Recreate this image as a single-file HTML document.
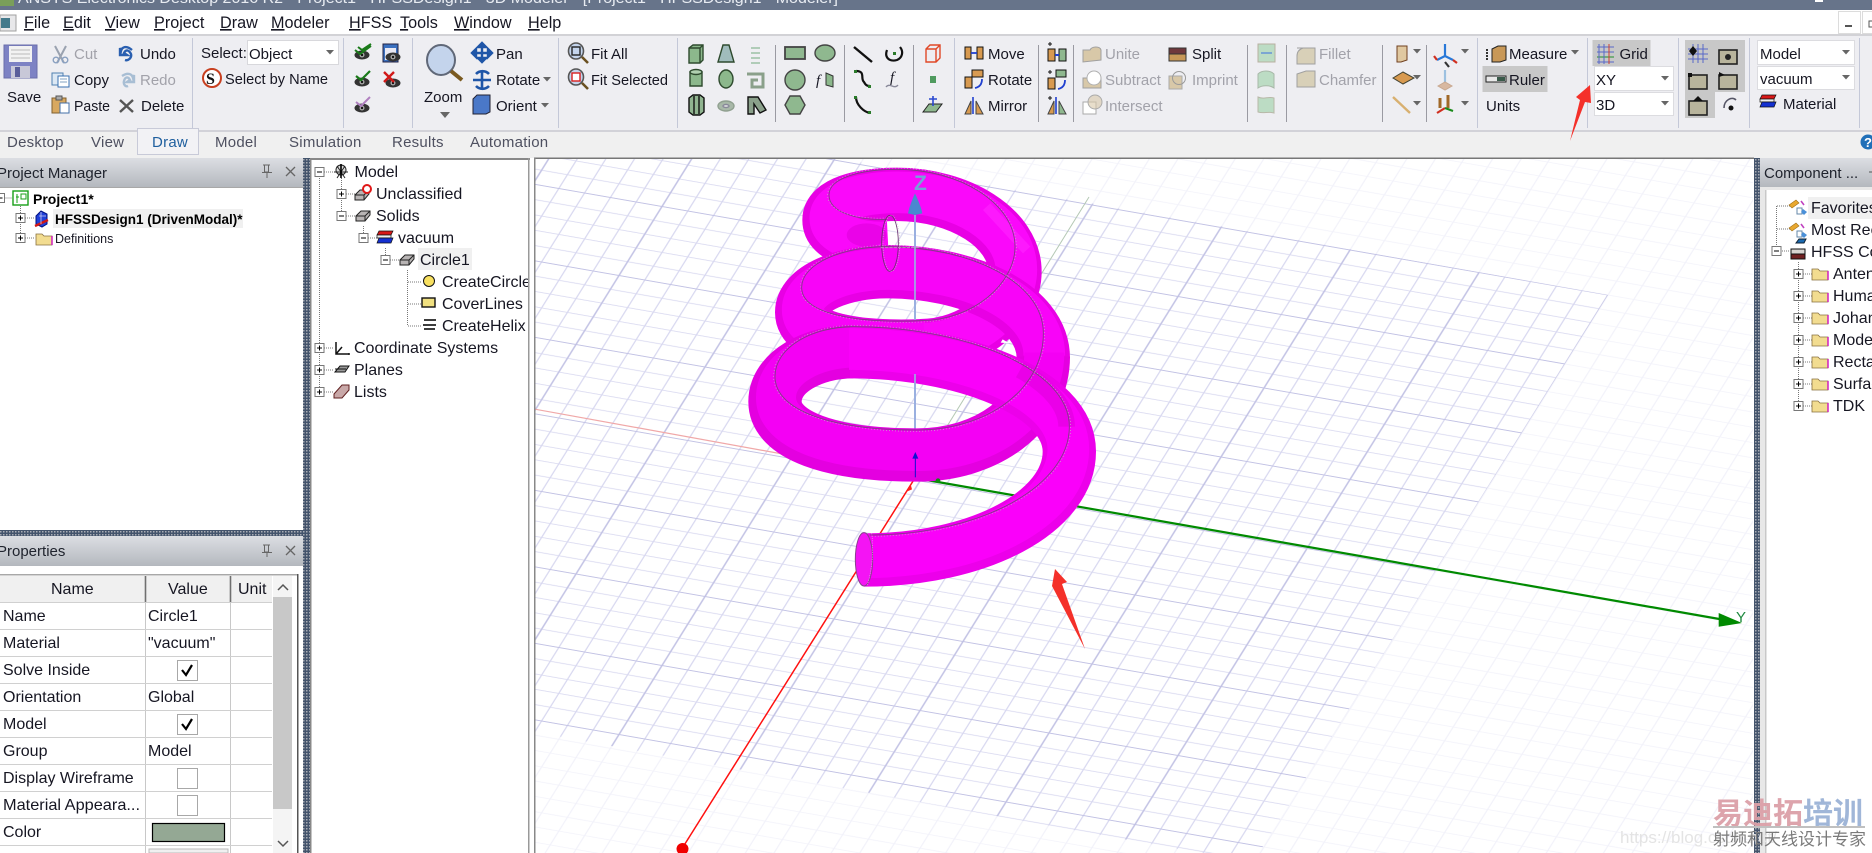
<!DOCTYPE html>
<html><head><meta charset="utf-8"><title>HFSS</title>
<style>
html,body{margin:0;padding:0;background:#fff;width:1872px;height:853px;overflow:hidden}
svg{display:block;position:absolute;left:0;top:0}
text{font-family:"Liberation Sans","Noto Sans CJK SC",sans-serif;font-size:15px;fill:#161622}
.g{fill:#a2a2aa}
.tab{fill:#4e5060;letter-spacing:.25px}
.b{font-weight:bold;font-size:13.5px;fill:#000}
.h{font-size:15px;fill:#20242e}
.c{fill:#222}
.tr text{font-size:16px}
.mn text{font-size:16.2px}
</style></head><body>
<svg width="1872" height="853" viewBox="0 0 1872 853" xmlns="http://www.w3.org/2000/svg">
<defs>
<pattern id="sp" width="3" height="3" patternUnits="userSpaceOnUse"><rect width="3" height="3" fill="#44546c"/><rect width="1.5" height="1.5" fill="#a8acb4"/></pattern>
<linearGradient id="hd" x1="0" y1="0" x2="0" y2="1"><stop offset="0" stop-color="#dcdee3"/><stop offset="1" stop-color="#b4b8be"/></linearGradient>
<pattern id="gf" width="100" height="100" patternUnits="userSpaceOnUse" patternTransform="matrix(1.29 .225 -.43 .69 1608 295)"><path d="M0 0H100M0 20H100M0 40H100M0 60H100M0 80H100M0 100H100M0 0V100M20 0V100M40 0V100M60 0V100M80 0V100M100 0V100" stroke="#f2f2fa" stroke-width="1" fill="none"/></pattern>
<pattern id="gd" width="100" height="100" patternUnits="userSpaceOnUse" patternTransform="matrix(1.29 .225 -.43 .69 1608 295)"><path d="M0 20H100M0 40H100M0 60H100M0 80H100M20 0V100M40 0V100M60 0V100M80 0V100" stroke="#d8d8f0" stroke-width=".95" fill="none"/><path d="M0 0H100M0 100H100M0 0V100M100 0V100" stroke="#c2c2e4" stroke-width="1.2" fill="none"/></pattern>
<clipPath id="vp"><rect x="535" y="159" width="1218" height="694"/></clipPath>
<clipPath id="gclip"><polygon points="534,157 830,157 1608,295 1259,853 1200,853 534,732"/></clipPath>
<clipPath id="mt"><rect x="311" y="160" width="217" height="260"/></clipPath>
<clipPath id="pn"><rect x="0" y="600" width="145" height="253"/></clipPath>
<g id="pb"><rect x="-4.5" y="-4.5" width="9" height="9" fill="#fff" stroke="#777"/><path d="M-2.5 0H2.5M0-2.5V2.5" stroke="#000" fill="none"/></g>
<g id="mb"><rect x="-4.5" y="-4.5" width="9" height="9" fill="#fff" stroke="#777"/><path d="M-2.5 0H2.5" stroke="#000" fill="none"/></g>
<g id="ar"><path d="M-4-2H4L0 2.5Z" fill="#666"/></g>
<g id="eye"><ellipse cx="0" cy="3" rx="7.5" ry="4.5" fill="#333"/><circle cx="0" cy="3" r="2.5" fill="#aaa"/><circle cx="0" cy="3" r="1.2" fill="#111"/></g>
<g id="solid"><path d="M0 5V0L5-5H14V-1L9 5Z" fill="#b8b4b4" stroke="#222"/><path d="M0 0H9V5M9 0L14-5" fill="none" stroke="#222"/></g>
<g id="mat"><path d="M1-7H15L13-3H-1Z" fill="#d81818" stroke="#111" stroke-width=".7"/><path d="M-1-3H13V0H-1Z" fill="#eee" stroke="#111" stroke-width=".7"/><path d="M1 0H15L13 5H-1Z" fill="#1430d0" stroke="#111" stroke-width=".7"/></g>
<g id="fold"><path d="M0-5H6L8-3H16V6H0Z" fill="#f2dc90" stroke="#887040" stroke-width=".8"/><path d="M16-3V6" stroke="#d020c0" stroke-width="1.5"/></g>
<g id="fv"><path d="M-6-1L1-6L4-3L-3 2Z" fill="#e8a830" stroke="#a07018" stroke-width=".6"/><path d="M6-5L9-1" stroke="#c040c0" stroke-width="1.6"/><path d="M2 2H7V8H2Z" fill="#fff" stroke="#6688aa"/><path d="M8 3L12 6L9 9L6 6Z" fill="#4a90d8"/></g>
<g id="box"><rect x="0" y="0" width="18" height="14" fill="#b8b49c" stroke="#222" stroke-width="1.6"/></g>
</defs>

<!-- base -->
<rect width="1872" height="853" fill="#fff"/>
<!-- title bar -->
<rect width="1872" height="10" fill="#67748a"/>
<rect x="0" y="0" width="14" height="6" fill="#7a9f5a"/>
<text x="18" y="3" style="fill:#e8ecf2" textLength="820" lengthAdjust="spacingAndGlyphs">ANSYS Electronics Desktop 2016 R2 - Project1 - HFSSDesign1 - 3D Modeler - [Project1 - HFSSDesign1 - Modeler]</text>
<rect x="1815" y="0" width="8" height="2" fill="#fff"/>

<!-- menu -->
<rect x="0" y="10" width="1872" height="25" fill="#fff"/>
<rect x="0" y="15" width="16" height="16" fill="#e8e8ea" stroke="#a0a0a0"/><rect x="1" y="18" width="9" height="10" fill="#447a8c"/>
<g class="mn">
<text x="24" y="28"><tspan text-decoration="underline">F</tspan>ile</text>
<text x="63" y="28"><tspan text-decoration="underline">E</tspan>dit</text>
<text x="105" y="28"><tspan text-decoration="underline">V</tspan>iew</text>
<text x="154" y="28"><tspan text-decoration="underline">P</tspan>roject</text>
<text x="220" y="28"><tspan text-decoration="underline">D</tspan>raw</text>
<text x="271" y="28"><tspan text-decoration="underline">M</tspan>odeler</text>
<text x="349" y="28"><tspan text-decoration="underline">H</tspan>FSS</text>
<text x="400" y="28"><tspan text-decoration="underline">T</tspan>ools</text>
<text x="454" y="28"><tspan text-decoration="underline">W</tspan>indow</text>
<text x="528" y="28"><tspan text-decoration="underline">H</tspan>elp</text>
</g>
<rect x="1838.5" y="11.5" width="22" height="22" fill="#fff" stroke="#dcdcdc"/><rect x="1845" y="25" width="7" height="2" fill="#555"/>
<rect x="1862.5" y="11.5" width="12" height="22" fill="#fff" stroke="#dcdcdc"/><rect x="1869" y="21" width="6" height="6" fill="none" stroke="#555"/>

<!-- ribbon -->
<rect x="0" y="34" width="1872" height="97" fill="#eeeef2"/>
<rect x="0" y="34" width="1872" height="2" fill="#d2d2d6"/>
<rect x="0" y="130" width="1872" height="2" fill="#d2d2d8"/>
<rect x="0" y="132" width="1872" height="26" fill="#f0f0f0"/>
<g stroke="#c4c8d8" stroke-width="1"><path d="M192.5 38V128M343.5 38V128M412.5 38V128M558.5 38V128M677.5 38V128M954.5 38V128M1477.5 38V128M1587.5 38V128M1678.5 38V128M1749.5 38V128M1859.5 38V128"/></g>
<g stroke="#9a9aa2" stroke-width="1"><path d="M775.5 45V122M844.5 45V122M913.5 45V122M1038.5 45V122M1073.5 45V122M1247.5 45V122M1286.5 45V122M1382.5 45V122M1426.5 45V122"/></g>

<!-- Save -->
<path d="M4 45H37V78H4Z" fill="#7d82c4" stroke="#6a6eaa"/><rect x="9" y="46" width="23" height="16" fill="#f2f2f2"/><path d="M11 50H30M11 54H30M11 58H30" stroke="#bbb"/><rect x="11" y="66" width="19" height="12" fill="#c8c8d8"/><rect x="15" y="67" width="5" height="10" fill="#5a5e9a"/>
<text x="7" y="102">Save</text>
<!-- Clipboard -->
<path d="M55 46L64 63M66 46L57 63" stroke="#9aa2b0" stroke-width="2"/><circle cx="56" cy="60" r="2.8" fill="none" stroke="#8aa0c0" stroke-width="1.4"/><circle cx="65" cy="60" r="2.8" fill="none" stroke="#8aa0c0" stroke-width="1.4"/>
<text x="74" y="59" class="g">Cut</text>
<rect x="52" y="73" width="11" height="12" fill="#dce8f4" stroke="#5080b0"/><rect x="58" y="76" width="11" height="11" fill="#fff" stroke="#3a70b0"/><path d="M60 79H67M60 82H67" stroke="#80a0c0"/>
<text x="74" y="85">Copy</text>
<rect x="52" y="98" width="14" height="15" fill="#d8a860" stroke="#806030"/><rect x="56" y="96" width="6" height="4" fill="#aaa" stroke="#555"/><rect x="60" y="103" width="9" height="10" fill="#fff" stroke="#4470a8"/>
<text x="74" y="111" textLength="36" lengthAdjust="spacingAndGlyphs">Paste</text>
<path d="M132 50C126 45 122 47 121 51L120 48V55H127L124 53C126 49 129 50 131 54C132 58 128 61 125 60" fill="none" stroke="#2a5fb0" stroke-width="2.4"/>
<text x="140" y="59">Undo</text>
<path d="M122 76C128 72 132 74 133 78L134 75V82H127L130 80C128 76 125 77 124 81C123 85 126 87 128 86" fill="none" stroke="#a8bed4" stroke-width="2.4"/>
<text x="140" y="85" class="g">Redo</text>
<path d="M120 100L133 112M133 100L120 112" stroke="#555" stroke-width="2.4"/>
<text x="141" y="111">Delete</text>
<!-- Select -->
<text x="201" y="58">Select:</text>
<rect x="247.500" y="40.500" width="91" height="24" fill="#fff" stroke="#d8d8dc"/>
<text x="249" y="59">Object</text><use href="#ar" x="330" y="52"/>
<circle cx="212" cy="78" r="9" fill="#fff" stroke="#c84020" stroke-width="2"/><text x="206" y="84" style="font-weight:bold;font-size:16px;fill:#111;font-family:'Liberation Serif',serif">S</text>
<text x="225" y="84" textLength="103" lengthAdjust="spacingAndGlyphs">Select by Name</text>
<!-- eyes -->
<use href="#eye" x="362" y="52"/><path d="M355 50L360 54L371 46M358 47L362 50L371 44" fill="none" stroke="#1a7a1a" stroke-width="2"/>
<use href="#eye" x="362" y="79"/><path d="M356 76L361 80L370 71" fill="none" stroke="#1a7a1a" stroke-width="2.2"/>
<use href="#eye" x="362" y="105"/><path d="M356 102L361 106L370 97" fill="none" stroke="#b080c0" stroke-width="2"/>
<rect x="383" y="44" width="15" height="18" fill="#3a70c0" stroke="#224"/><rect x="385" y="48" width="11" height="12" fill="#e8e8f4"/><use href="#eye" x="393" y="54"/>
<use href="#eye" x="393" y="80"/><path d="M384 72L394 82M394 72L384 82" stroke="#d01818" stroke-width="2.4"/>
<!-- zoom -->
<ellipse cx="441" cy="60" rx="14" ry="15" fill="#c4d4ec" stroke="#606878" stroke-width="2"/><path d="M451 71L462 80" stroke="#7a5a20" stroke-width="4"/>
<text x="424" y="102">Zoom</text><path d="M440 112H450L445 118Z" fill="#666"/>
<path d="M482 43V62M472 53H492M482 43L478 47H486ZM482 62L478 58H486ZM472 53L476 49V57ZM492 53L488 49V57Z" stroke="#1f56a8" stroke-width="2.4" fill="#1f56a8"/>
<text x="496" y="59">Pan</text>
<path d="M482 71V89M473 80H491M476 74A9 9 0 0 1 489 74M489 86A9 9 0 0 1 476 86" stroke="#1f56a8" stroke-width="2.6" fill="none"/>
<text x="496" y="85">Rotate</text><use href="#ar" x="547" y="79"/>
<path d="M473 99L477 95H490V112L486 114H473Z" fill="#4a78c8" stroke="#223"/>
<text x="496" y="111">Orient</text><use href="#ar" x="545" y="105"/>
<!-- fit -->
<ellipse cx="576" cy="51" rx="7.500" ry="8" fill="#c4d4ec" stroke="#555" stroke-width="1.6"/><rect x="572" y="47" width="8" height="8" fill="none" stroke="#222" stroke-width="1.4"/><path d="M582 57L588 63" stroke="#6a5020" stroke-width="2.6"/>
<text x="591" y="59">Fit All</text>
<ellipse cx="576" cy="77" rx="7.500" ry="8" fill="#c4d4ec" stroke="#555" stroke-width="1.6"/><rect x="572" y="73" width="8" height="8" fill="#fff" stroke="#d82020" stroke-width="1.4"/><path d="M582 83L588 89" stroke="#6a5020" stroke-width="2.6"/>
<text x="591" y="85" textLength="77" lengthAdjust="spacingAndGlyphs">Fit Selected</text>
<!-- 3D shapes -->
<g stroke="#2e4a2e" stroke-width="1.4" fill="#8cb88c">
<path d="M689 48L693 45H703V60L700 63H689Z"/><path d="M689 48H700V63M700 48L703 45" fill="none"/>
<path d="M723 45H729L734 62H718Z" fill="#a0bcbc"/>
<path d="M690 72H702V86H690Z"/><ellipse cx="696" cy="72" rx="6" ry="2.500" fill="#b0d0b0"/>
<ellipse cx="726" cy="79" rx="7" ry="9" fill="#8cb88c"/>
<path d="M689 98L693 95H700L704 98V112L700 115H693L689 112Z" fill="#90b490" stroke="#111"/><path d="M694 96V114M699 96V114" fill="none" stroke="#111"/>
<ellipse cx="726" cy="106" rx="8" ry="5" fill="#a8b8a8" stroke="#90a090"/><ellipse cx="726" cy="106" rx="3" ry="1.500" fill="#eee" stroke="#889"/>
<path d="M751 48H760M751 53H760M751 58H760M751 63H760" fill="none" stroke="#b0ccb8" stroke-width="2"/>
<path d="M747 74H763V87H752V80H758" fill="none" stroke="#8aa08a" stroke-width="3"/>
<path d="M748 114V97H758L766 110L760 113L754 104V114Z" fill="#8aa08a" stroke="#111"/>
<rect x="785" y="47" width="20" height="12" fill="#90b890" stroke="#444" stroke-width="1.8"/>
<ellipse cx="825" cy="53" rx="10" ry="8" fill="#8fb88f" stroke="#444"/>
<ellipse cx="795" cy="80" rx="10" ry="10" fill="#8fb88f" stroke="#444"/>
<path d="M815 105L820 96H830L835 105L830 114H820Z" transform="translate(-30,0)" fill="#8fb88f" stroke="#444"/>
</g>
<text x="816" y="85" style="font-family:'Liberation Serif',serif;font-style:italic;font-size:15px">f</text><path d="M826 73L833 76V87L826 85Z" fill="#8cb88c" stroke="#333"/>
<path d="M854 47L872 62" stroke="#111" stroke-width="2.4"/>
<path d="M887 50C884 58 890 62 897 60C902 58 904 52 900 47" fill="none" stroke="#111" stroke-width="2.2"/><rect x="893" y="52" width="3" height="3" fill="#2a7a2a"/>
<path d="M856 71C866 71 860 79 864 82C866 86 868 86 870 86" fill="none" stroke="#111" stroke-width="2.2"/><rect x="854" y="70" width="3" height="3" fill="#2a7a2a"/><rect x="868" y="85" width="3" height="3" fill="#2a7a2a"/>
<text x="890" y="82" style="font-family:'Liberation Serif',serif;font-style:italic;font-size:15px">f</text><path d="M886 87C890 82 894 90 898 85" fill="none" stroke="#889" stroke-width="1.4"/>
<path d="M856 97C856 105 864 112 870 113" fill="none" stroke="#111" stroke-width="2.2"/><rect x="854" y="96" width="3" height="3" fill="#2a7a2a"/><rect x="868" y="111" width="3" height="3" fill="#2a7a2a"/>
<path d="M926 49L930 45H940V58L936 62H926Z M926 49H936V62M936 49L940 45" fill="none" stroke="#e04828" stroke-width="1.4"/>
<rect x="930" y="76" width="6" height="7" fill="#4f9a5f"/>
<path d="M923 112L929 104H942L936 112Z" fill="#8fb88f" stroke="#222"/><path d="M933 96V106M929 99H937" stroke="#2a48d0" stroke-width="1.6"/>
<!-- move etc -->
<rect x="965" y="47" width="6" height="12" fill="#d89a50" stroke="#111"/><rect x="977" y="47" width="6" height="12" fill="#d89a50" stroke="#111"/><path d="M971 53H977" stroke="#2040d0" stroke-width="1.8"/>
<text x="988" y="59">Move</text>
<rect x="965" y="77" width="7" height="11" fill="#d89a50" stroke="#111"/><rect x="972" y="70" width="11" height="7" fill="#d89a50" stroke="#111"/><path d="M975 88C980 87 982 84 982 79" fill="none" stroke="#2040d0" stroke-width="1.8"/>
<text x="988" y="85">Rotate</text>
<path d="M965 114L971 101V114ZM983 114L976 101V114Z" fill="#d89a50" stroke="#444"/><path d="M973 97V114" stroke="#2040d0" stroke-width="1.6"/>
<text x="988" y="111">Mirror</text>
<path d="M1048 44H1052M1050 42V46" stroke="#111"/><rect x="1048" y="49" width="7" height="12" fill="#d89a50" stroke="#111"/><rect x="1059" y="49" width="7" height="12" fill="#8fb88f" stroke="#111"/><path d="M1055 55H1059" stroke="#2040d0" stroke-width="2"/>
<path d="M1048 72H1052M1050 70V74" stroke="#111"/><rect x="1048" y="78" width="7" height="11" fill="#d89a50" stroke="#111"/><rect x="1056" y="70" width="10" height="7" fill="#8fb88f" stroke="#111"/><path d="M1058 89C1063 88 1065 85 1065 80" fill="none" stroke="#2040d0" stroke-width="1.8"/>
<path d="M1048 98H1052M1050 96V100" stroke="#111"/><path d="M1048 114L1054 101V114Z" fill="#d89a50" stroke="#444"/><path d="M1066 114L1059 101V114Z" fill="#8fb88f" stroke="#444"/><path d="M1056 97V114" stroke="#2040d0" stroke-width="1.6"/>
<!-- boolean grey -->
<path d="M1083 50H1090C1092 46 1100 46 1101 50V60L1083 62Z" fill="#d8c8a8" stroke="#a0a0a0"/>
<text x="1105" y="59" class="g">Unite</text>
<path d="M1083 78H1101V88H1083Z" fill="#d8c8a8" stroke="#a0a0a0"/><circle cx="1094" cy="78" r="7" fill="#fff" stroke="#b0b0b0"/>
<text x="1105" y="85" class="g">Subtract</text>
<rect x="1083" y="102" width="13" height="12" fill="#fff" stroke="#aaa"/><circle cx="1095" cy="102" r="7" fill="#d8c8a8" stroke="#aaa" fill-opacity=".6"/>
<text x="1105" y="111" class="g">Intersect</text>
<rect x="1169" y="48" width="17" height="6" fill="#70383c" stroke="#333"/><rect x="1169" y="54" width="17" height="7" fill="#c89858" stroke="#333"/>
<text x="1192" y="59">Split</text>
<rect x="1169" y="76" width="13" height="13" fill="#d8c8a8" stroke="#aaa"/><circle cx="1179" cy="78" r="6.500" fill="none" stroke="#999"/>
<text x="1192" y="85" class="g">Imprint</text>
<rect x="1258" y="44" width="17" height="18" fill="#bcdcc4" stroke="#b8b0a0"/><path d="M1261 53H1272" stroke="#6090d8" stroke-width="1.4"/>
<path d="M1258 88V74C1262 70 1270 70 1274 74V88C1270 85 1262 85 1258 88Z" fill="#bcdcc4" stroke="#a8b8a8"/>
<path d="M1258 97C1264 100 1268 96 1274 98V113C1268 111 1264 114 1258 112Z" fill="#bcdcc4" stroke="#b8b8a8"/>
<!-- fillet -->
<path d="M1297 48H1315V64H1297V56Q1297 50 1303 48Z" fill="#d8d0b8" stroke="#a0a0a0"/>
<text x="1319" y="59" class="g">Fillet</text>
<path d="M1297 74L1306 71H1315V87H1297Z" fill="#d8d0b8" stroke="#a0a0a0"/>
<text x="1319" y="85" class="g">Chamfer</text>
<path d="M1397 46H1407V60L1401 62H1397Z" fill="#e0c8a0" stroke="#704020"/><path d="M1397 46V60" stroke="#704020"/><use href="#ar" x="1417" y="51"/>
<path d="M1393 78L1403 72L1414 78L1403 84Z" fill="#d89a50" stroke="#443"/><use href="#ar" x="1417" y="77"/>
<path d="M1393 97L1410 113" stroke="#d8b070" stroke-width="2.4"/><use href="#ar" x="1417" y="103"/>
<path d="M1445 44V56M1445 56L1437 60M1445 56L1453 60" stroke="#2878d8" stroke-width="2.2" fill="none"/><path d="M1437 60L1434 56M1453 60L1457 63" stroke="#d03020" stroke-width="2.2"/><path d="M1445 62L1449 67" stroke="#333" stroke-width="2.2"/><use href="#ar" x="1465" y="51"/>
<path d="M1445 70V82" stroke="#9cc0e0" stroke-width="2.2"/><path d="M1438 86L1445 82L1452 86L1445 90Z" fill="#d8b8a0" stroke="#c8a890"/>
<path d="M1440 98V108M1448 95V108" stroke="#a06828" stroke-width="3"/><path d="M1445 108L1437 113" stroke="#d03020" stroke-width="2.2"/><path d="M1445 108L1453 111" stroke="#1a8a1a" stroke-width="2.2"/><use href="#ar" x="1465" y="103"/>
<!-- measure -->
<path d="M1492 49L1498 46H1506V60L1500 62H1492Z" fill="#c89858" stroke="#222"/><path d="M1487 49V61" stroke="#333" stroke-dasharray="2 1" stroke-width="2"/>
<text x="1509" y="59">Measure</text><use href="#ar" x="1575" y="52"/>
<rect x="1482.500" y="66" width="65" height="26" fill="#c8c8c8"/>
<rect x="1486" y="76" width="20" height="6" fill="#e8e8e8" stroke="#222"/><rect x="1497" y="77" width="8" height="4" fill="#3a5a4a"/>
<text x="1509" y="85">Ruler</text>
<text x="1486" y="111">Units</text>
<rect x="1592.500" y="40" width="58" height="26" fill="#c8c8c8"/>
<path d="M1597 47H1614M1597 52H1614" stroke="#5868c8"/><path d="M1597 57H1614" stroke="#20902a"/><path d="M1597 62H1614" stroke="#5868c8"/><path d="M1599 44V64M1604 44V64" stroke="#5868c8"/><path d="M1609 44V64" stroke="#d04030"/>
<text x="1619.500" y="59">Grid</text>
<rect x="1594.500" y="66.500" width="79" height="24" fill="#fff" stroke="#dcdce0"/><text x="1596" y="85">XY</text><use href="#ar" x="1665" y="78"/>
<rect x="1594.500" y="92.500" width="79" height="23" fill="#fff" stroke="#dcdce0"/><text x="1596" y="110">3D</text><use href="#ar" x="1665" y="103"/>
<rect x="1685" y="40" width="60" height="52" fill="#c8c8c8"/><rect x="1685" y="92" width="30" height="26" fill="#c8c8c8"/>
<path d="M1688 49H1708M1688 54H1708M1688 59H1708M1693 44V63M1698 44V63M1703 44V63" stroke="#5868c8"/><path d="M1693 46L1697 51L1693 56L1689 51Z" fill="#111"/>
<use href="#box" x="1719" y="50"/><circle cx="1728" cy="57" r="3" fill="#222"/>
<use href="#box" x="1689" y="75"/><rect x="1688" y="73" width="4" height="4" fill="#111"/>
<use href="#box" x="1719" y="75"/><path d="M1719 72L1725 75L1719 77Z" fill="#111"/>
<use href="#box" x="1689" y="101"/><path d="M1693 101L1698 96L1703 101Z" fill="#111"/>
<path d="M1724 108C1724 100 1732 96 1736 100" fill="none" stroke="#556" stroke-width="1.6"/><circle cx="1731" cy="108" r="2.500" fill="#111"/>
<rect x="1757.500" y="40.500" width="97" height="24" fill="#fff" stroke="#dcdce0"/><text x="1760" y="59">Model</text><use href="#ar" x="1846" y="52"/>
<rect x="1757.500" y="66.500" width="97" height="23" fill="#fff" stroke="#dcdce0"/><text x="1760" y="84">vacuum</text><use href="#ar" x="1846" y="77"/>
<use href="#mat" x="1761" y="102"/>
<text x="1783" y="109">Material</text>
<!-- tabs -->
<rect x="137.500" y="128.500" width="61" height="26" fill="#f2f2f5" stroke="#c8cad8"/>
<text x="7" y="147" class="tab">Desktop</text><text x="91" y="147" class="tab">View</text><text x="152" y="147" class="tab" style="fill:#1f5f9e">Draw</text><text x="215" y="147" class="tab">Model</text><text x="289" y="147" class="tab">Simulation</text><text x="392" y="147" class="tab">Results</text><text x="470" y="147" class="tab">Automation</text>
<circle cx="1868" cy="142" r="7.500" fill="#1f6fb8"/><text x="1864" y="147" style="fill:#fff;font-weight:bold;font-size:13px">?</text>

<!-- left panel -->
<rect x="0" y="158" width="303" height="29" fill="url(#hd)"/><rect x="0" y="187" width="303" height="1" fill="#a8a8a8"/>
<text x="-3" y="178" class="h">Project Manager</text>
<path d="M263 165H270M264.500 165V172H268.500V165M262 172.500H272M267 173V178" fill="none" stroke="#666"/>
<path d="M286 167L295 176M295 167L286 176" stroke="#666" stroke-width="1.3"/>
<g stroke="#777" stroke-dasharray="1 1" fill="none"><path d="M4.500 198H12M20.500 204V238M25 218H34M25 238H35"/></g>
<use href="#mb" x="0" y="198"/><use href="#pb" x="20.500" y="218"/><use href="#pb" x="20.500" y="238"/>
<rect x="13" y="191" width="15" height="14" fill="#fff" stroke="#18a018" stroke-width="1.4"/><path d="M17 194V203M21 194H26V199H21ZM16 197H19" stroke="#18a018" fill="none"/>
<text x="33" y="204" class="b" style="font-size:14px">Project1*</text>
<rect x="53" y="209" width="190" height="19" fill="#f0f0f0"/>
<path d="M36 216L41 211L47 214V224L42 227L36 224Z" fill="#2040d8" stroke="#001080"/><path d="M35 226L48 220" stroke="#d01818" stroke-width="2.4"/><path d="M39 216H46M41 212V224" stroke="#cce" stroke-width=".8"/>
<text x="55" y="224" class="b">HFSSDesign1 (DrivenModal)*</text>
<use href="#fold" x="36" y="239"/><text x="55" y="243" style="font-size:12.500px">Definitions</text>

<rect x="0" y="530" width="303" height="6" fill="url(#sp)"/>
<rect x="0" y="536" width="303" height="30" fill="url(#hd)"/>
<text x="-3" y="556" class="h">Properties</text>
<path d="M263 545H270M264.500 545V552H268.500V545M262 552.500H272M267 553V557" fill="none" stroke="#666"/>
<path d="M286 546L295 555M295 546L286 555" stroke="#666" stroke-width="1.3"/>
<rect x="0" y="574" width="298" height="1.500" fill="#a8a8a8"/><rect x="297" y="574" width="1.500" height="279" fill="#555"/>
<rect x="0" y="576" width="272" height="26" fill="#f0f0f0"/>
<path d="M145.500 576V853M230.500 576V853" stroke="#c8c8c8"/><path d="M145.500 576V602M230.500 576V602" stroke="#707070" stroke-width="1.600"/>
<path d="M0 602.500H272M0 629.500H272M0 656.500H272M0 683.500H272M0 710.500H272M0 737.500H272M0 764.500H272M0 791.500H272M0 818.500H272M0 845.500H272" stroke="#d0d0d0"/>
<g class="tr">
<text x="51" y="594">Name</text><text x="168" y="594">Value</text><text x="238" y="594">Unit</text>
<text x="3" y="621">Name</text><text x="3" y="648">Material</text><text x="3" y="675">Solve Inside</text><text x="3" y="702">Orientation</text><text x="3" y="729">Model</text><text x="3" y="756">Group</text><text x="3" y="783">Display Wireframe</text><text x="3" y="810" textLength="137" lengthAdjust="spacingAndGlyphs">Material Appeara...</text><text x="3" y="837">Color</text>
<text x="148" y="621">Circle1</text><text x="148" y="648">"vacuum"</text><text x="148" y="702">Global</text><text x="148" y="756">Model</text>
</g>
<g fill="#fff" stroke="#a8a8a8"><rect x="177.500" y="660.500" width="20" height="20"/><rect x="177.500" y="714.500" width="20" height="20"/><rect x="177.500" y="768.500" width="20" height="20"/><rect x="177.500" y="795.500" width="20" height="20"/></g>
<path d="M182 670L186 675L192 665M182 724L186 729L192 719" fill="none" stroke="#000" stroke-width="2.200"/>
<rect x="152.500" y="823.500" width="72" height="18" fill="#94a894" stroke="#000" stroke-width="1.200"/>
<rect x="149" y="849" width="79" height="4" fill="#f0f0f0" stroke="#bbb"/>
<rect x="273" y="576" width="19" height="277" fill="#f4f4f4"/><rect x="273" y="597" width="19" height="212" fill="#c8c8c8"/>
<path d="M278 590L283 585L288 590M278 841L283 846L288 841" fill="none" stroke="#555" stroke-width="1.500"/>

<!-- splitter left -->
<rect x="303" y="158" width="8" height="695" fill="url(#sp)"/>

<!-- middle tree -->
<rect x="311" y="158" width="219" height="2" fill="#888"/><rect x="310" y="158" width="1.500" height="695" fill="#888"/><rect x="528" y="158" width="1.500" height="695" fill="#999"/>
<g stroke="#777" stroke-dasharray="1 1" fill="none"><path d="M319.500 172V392M324 172H333M341.500 178V216M346 194H355M346 216H355M363.500 226V238M368 238H377M385.500 248V260M390 260H399M407.500 270V326M408 282H421M408 304H421M408 326H421M324 348H333M324 370H333M324 392H333"/></g>
<g clip-path="url(#mt)" class="tr">
<use href="#mb" x="319.500" y="172"/><use href="#pb" x="341.500" y="194"/><use href="#mb" x="341.500" y="216"/><use href="#mb" x="363.500" y="238"/><use href="#mb" x="385.500" y="260"/><use href="#pb" x="319.500" y="348"/><use href="#pb" x="319.500" y="370"/><use href="#pb" x="319.500" y="392"/>
<g stroke="#222" fill="#ccc"><circle cx="341" cy="170" r="5" fill="#ddd"/><path d="M334 172L348 172M337 166L345 178M345 166L337 178" fill="none"/><path d="M341 164V178" stroke="#000" stroke-width="1.600"/></g>
<use href="#solid" x="355" y="195"/><circle cx="367" cy="189" r="4" fill="#fff" stroke="#e01818" stroke-width="2"/>
<use href="#solid" x="356" y="216"/>
<use href="#mat" x="378" y="238"/>
<use href="#solid" x="400" y="260"/>
<rect x="418" y="248" width="54" height="22" fill="#f0f0f0"/>
<circle cx="429" cy="281" r="5.500" fill="#f8e060" stroke="#111"/>
<rect x="422" y="298" width="13" height="9" fill="#f0e080" stroke="#111" stroke-width="1.400"/>
<path d="M424 320H436M423 325H436M424 329H435" stroke="#222" stroke-width="1.800"/>
<path d="M336 342V354H349M336 354L342 347" fill="none" stroke="#111" stroke-width="1.500"/><circle cx="349" cy="354" r="1" fill="#111"/>
<path d="M335 372L340 366H349L345 372ZM335 369H346" fill="#999" stroke="#111"/>
<path d="M334 394L342 385H349V390L342 398H334Z" fill="#c8a8a8" stroke="#602020"/>
<text x="354.500" y="177">Model</text><text x="376" y="199">Unclassified</text><text x="376" y="221">Solids</text><text x="398" y="243">vacuum</text><text x="420" y="265">Circle1</text><text x="442" y="287">CreateCircle</text><text x="442" y="309">CoverLines</text><text x="442" y="331">CreateHelix</text><text x="354" y="353">Coordinate Systems</text><text x="354" y="375">Planes</text><text x="354" y="397">Lists</text>
</g>

<!-- viewport -->
<g clip-path="url(#vp)">
<rect x="534" y="157" width="1220" height="696" fill="#fff"/>
<rect x="534" y="157" width="1220" height="696" fill="url(#gf)"/>
<rect x="534" y="157" width="1220" height="696" fill="url(#gd)" clip-path="url(#gclip)"/>
<path d="M534 409L915 478" stroke="#f0a8a8" stroke-width="1.200"/>
<path d="M915 478L1089 197" stroke="#b4c8b4" stroke-width="1"/>
<path d="M915 478L1725 620" stroke="#008a00" stroke-width="2.200"/>
<path d="M1718.700 613L1742 623L1718.700 626.700Z" fill="#008a00"/>
<text x="1736" y="622" style="font-size:15px;fill:#208a40">Y</text>
<path d="M915 478L683 847" stroke="#ff1010" stroke-width="1.500"/>
<ellipse cx="682.500" cy="849" rx="6" ry="6" fill="#f00000"/>
<path d="M915 190V478" stroke="#9ab0e0" stroke-width="2"/>

<!-- helix -->
<g transform="translate(720,150) scale(.33333)" fill="none" stroke-linecap="butt">
<defs>
<path id="h1" d="M500 283C420 287 327 265 327 210C327 160 420 133 530 133C720 133 885 235 885 365C885 475 760 587 600 587"/>
<path id="h2" d="M610 587C400 595 245 565 245 487C245 415 370 365 500 365C740 365 970 465 970 625"/>
<path id="h3" d="M970 620C970 795 800 915 590 915C330 915 165 855 165 755C165 665 280 605 400 605"/>
<path id="h4" d="M390 605C720 605 1048 725 1048 905C1048 1085 780 1230 432 1230"/>
</defs>
<g stroke="#e800e4" stroke-width="160"><use href="#h1"/></g>
<g stroke="#fa08fa" stroke-width="125"><use href="#h1" transform="translate(4,-6)"/></g>
<ellipse cx="440" cy="255" rx="60" ry="35" fill="#e000dc" stroke="none" opacity=".6"/>
<path d="M800 170L920 300" stroke="#ff24ff" stroke-width="30" opacity=".6"/>
<g stroke="#e800e4" stroke-width="160"><use href="#h2"/></g>
<g stroke="#f804f8" stroke-width="125"><use href="#h2" transform="translate(3,-8)"/></g>
<g stroke="#e400e0" stroke-width="160"><use href="#h3"/></g>
<g stroke="#f400f4" stroke-width="120"><use href="#h3" transform="translate(3,-12)"/></g>
<g stroke="#ec00ea" stroke-width="160"><use href="#h4"/></g>
<g stroke="#fa00fa" stroke-width="125"><use href="#h4" transform="translate(-3,-8)"/></g>
<path d="M900 660C990 710 1040 770 1040 830" stroke="#dc00d8" stroke-width="50" opacity=".55"/>
<path d="M500 208C420 212 327 190 327 135C327 85 420 58 530 58C720 58 885 160 885 290C885 400 760 512 600 512C400 520 245 490 245 412C245 340 370 290 500 290C740 290 970 390 970 550C970 720 800 840 590 840C330 840 165 780 165 680C165 590 280 530 400 530C720 530 1048 650 1048 830C1048 1010 780 1155 450 1155" stroke="#7a4080" stroke-width="2.500"/>
<path d="M500 204C420 208 323 190 323 135C323 82 420 54 530 54C720 54 889 160 889 290C889 400 760 516 600 516C400 524 241 490 241 412C241 336 370 286 500 286C740 286 974 390 974 550C974 724 800 844 590 844C330 844 161 780 161 680C161 586 280 526 400 526C720 526 1052 650 1052 830C1052 1014 780 1159 450 1159" stroke="#c8b4c8" stroke-width="2" stroke-dasharray="3 6"/>
<ellipse cx="510" cy="280" rx="25" ry="84" stroke="#6a3070" stroke-width="2.500"/>
<ellipse cx="514" cy="280" rx="25" ry="84" stroke="#c8c8c8" stroke-width="2" stroke-dasharray="3 4"/>
<path d="M482 293H600" stroke="#c0a0c0" stroke-width="2.500" stroke-dasharray="10 3"/>
<ellipse cx="432" cy="1228" rx="26" ry="80" fill="#f414f4" stroke="#8a4090" stroke-width="3"/>
<path d="M455 1150C462 1200 456 1260 442 1305" stroke="#d8c0d8" stroke-width="2" stroke-dasharray="3 4"/>
<path d="M848 568L868 580L842 578Z" fill="#fff" stroke="none"/>
<path d="M585 195V510M585 672V826" stroke="#9ab0e0" stroke-width="5"/>
<path d="M585 130C576 150 568 170 564 190L585 195L607 190C603 170 594 150 585 130Z" fill="#4a88d0" stroke="none"/>
<path d="M586 920V982" stroke="#1010d0" stroke-width="3"/><path d="M586 906L577 926H595Z" fill="#1010d0" stroke="none"/>
<path d="M560 1025L572 1003L576 1018Z" fill="#ff2020" stroke="none"/>
<circle cx="654" cy="992" r="7" fill="#108a10" stroke="none"/>
</g>
<text x="914" y="190" style="font-size:21px;font-weight:bold;fill:#78a0d8">Z</text>

<path d="M1055 569L1067 582L1062 584L1085 649L1052 586Z" fill="#f4302a"/>
</g>
<rect x="534" y="157.500" width="1220" height="1.500" fill="#777"/>
<rect x="534" y="158" width="1.500" height="695" fill="#888"/>

<!-- top red arrow -->
<path d="M1590 85L1591 103L1585 102L1570 141L1580 100L1576 97Z" fill="#f4302a"/>

<!-- right panel -->
<rect x="1754" y="158" width="6" height="695" fill="url(#sp)"/>
<rect x="1760" y="158" width="112" height="29" fill="url(#hd)"/>
<text x="1764" y="178" class="h">Component ...</text>
<path d="M1869 172H1872" stroke="#555"/>
<rect x="1760" y="187" width="112" height="666" fill="#e8e8e8"/>
<rect x="1765" y="190" width="107" height="663" fill="#fff"/><rect x="1765" y="190" width="1.500" height="663" fill="#c8c8c8"/>
<rect x="1808" y="197" width="64" height="22" fill="#f0f0f0"/>
<g stroke="#777" stroke-dasharray="1 1" fill="none"><path d="M1776.500 206V251M1777 206H1790M1777 229H1790M1782 251H1790M1798.500 262V406M1803 274H1812M1803 296H1812M1803 318H1812M1803 340H1812M1803 362H1812M1803 384H1812M1803 406H1812"/></g>
<use href="#fv" x="1795" y="206"/><use href="#fv" x="1795" y="229"/>
<use href="#mb" x="1776.500" y="251"/><use href="#pb" x="1798.500" y="274"/><use href="#pb" x="1798.500" y="296"/><use href="#pb" x="1798.500" y="318"/><use href="#pb" x="1798.500" y="340"/><use href="#pb" x="1798.500" y="362"/><use href="#pb" x="1798.500" y="384"/><use href="#pb" x="1798.500" y="406"/>
<path d="M1796 243L1799 239H1806L1804 243Z" fill="#1a6ab0" stroke="#123"/><rect x="1791" y="249" width="14" height="5" fill="#d8d4d0" stroke="#111"/><rect x="1791" y="254" width="14" height="5" fill="#702020" stroke="#111"/>
<use href="#fold" x="1812" y="274"/><use href="#fold" x="1812" y="296"/><use href="#fold" x="1812" y="318"/><use href="#fold" x="1812" y="340"/><use href="#fold" x="1812" y="362"/><use href="#fold" x="1812" y="384"/><use href="#fold" x="1812" y="406"/>
<g class="tr">
<text x="1811" y="213">Favorites</text><text x="1811" y="235">Most Recently</text><text x="1811" y="257">HFSS Components</text>
<text x="1833" y="279">Antennas</text><text x="1833" y="301">Human</text><text x="1833" y="323">Johanson</text><text x="1833" y="345">Modelithics</text><text x="1833" y="367">Rectangular</text><text x="1833" y="389">Surface</text><text x="1833" y="411">TDK</text>
</g>

<!-- watermark -->
<text x="1620" y="843" style="font-size:17px;fill:#e4e4e4">https://blog.csdn.net/</text>
<text x="1713" y="824" style="font-size:30px;font-weight:bold;fill:#dca0a8;opacity:.95">易迪拓</text>
<text x="1803" y="824" style="font-size:30px;font-weight:bold;fill:#a0b6d8">培训</text>
<rect x="1713" y="826" width="152" height="2" fill="#c0c0c0"/>
<text x="1713" y="845" style="font-size:17px;fill:#7a7a7a">射频和天线设计专家</text>
</svg>
</body></html>
